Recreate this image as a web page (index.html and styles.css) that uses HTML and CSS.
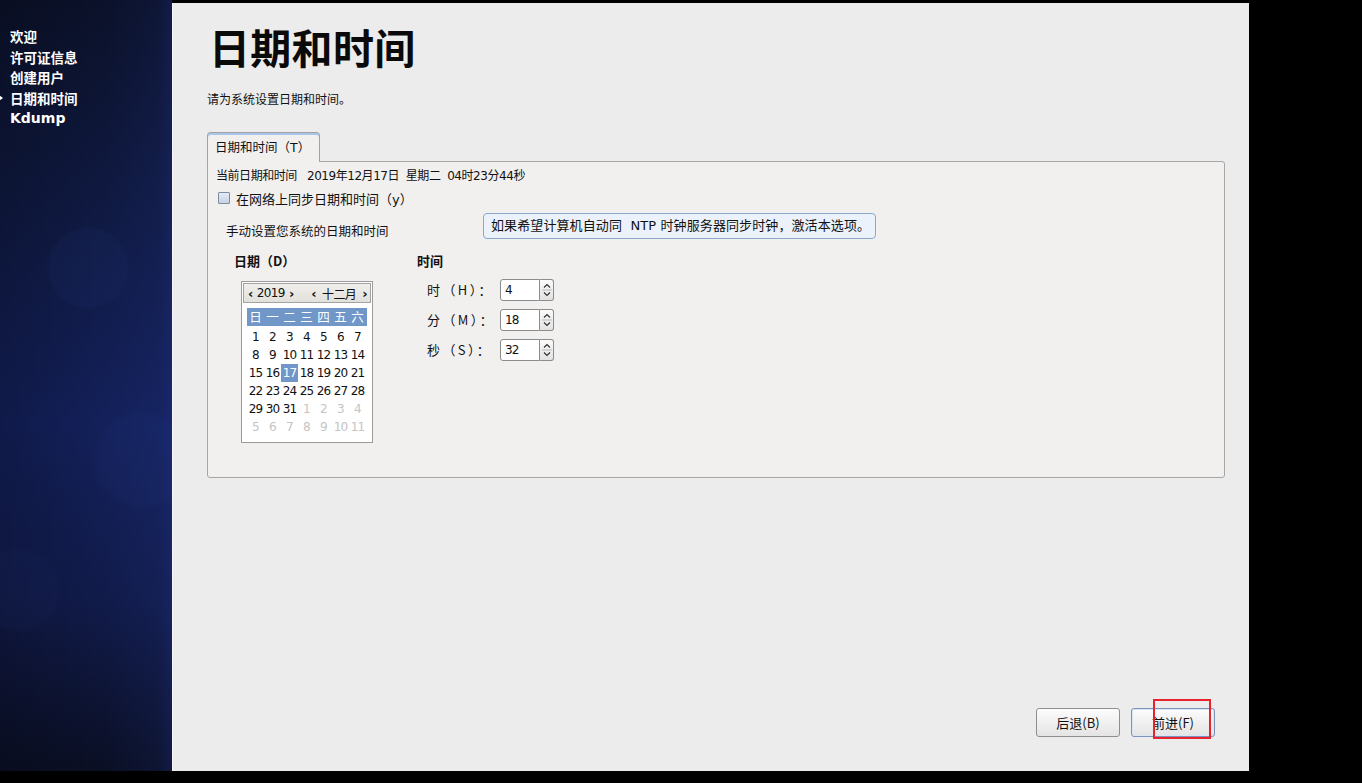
FILE: index.html
```html
<!DOCTYPE html>
<html lang="zh-CN">
<head>
<meta charset="utf-8">
<title>日期和时间</title>
<link rel="stylesheet" href="styles.css">
</head>
<body>
<div class="screen">
  <aside class="sidebar">
    <ul class="steps">
      <li>欢迎</li>
      <li>许可证信息</li>
      <li>创建用户</li>
      <li class="current">日期和时间</li>
      <li class="latin">Kdump</li>
    </ul>
  </aside>
  <main class="panel">
    <h1 class="title">日期和时间</h1>
    <p class="subtitle">请为系统设置日期和时间。</p>
    <div class="notebook">
      <div class="tab">日期和时间（T）</div>
      <div class="page">
        <div class="current-time">当前日期和时间&nbsp;&nbsp; 2019年12月17日&nbsp; 星期二&nbsp; 04时23分44秒</div>
        <div class="sync"><span class="checkbox"></span>在网络上同步日期和时间（y）</div>
        <div class="manual">手动设置您系统的日期和时间</div>
        <div class="tooltip">如果希望计算机自动同&nbsp; NTP 时钟服务器同步时钟，激活本选项。</div>
        <div class="pickers">
          <section class="date-sec">
            <h3 class="sec-label">日期（D）</h3>
            <div class="calendar">
              <div class="cal-head">
                <span class="nav"><span class="arr">‹</span>2019<span class="arr">›</span></span>
                <span class="nav wide"><span class="arr">‹</span>十二月<span class="arr">›</span></span>
              </div>
              <div class="cal-days">
                <span>日</span><span>一</span><span>二</span><span>三</span><span>四</span><span>五</span><span>六</span>
              </div>
              <div class="cal-grid">
                <span>1</span><span>2</span><span>3</span><span>4</span><span>5</span><span>6</span><span>7</span>
                <span>8</span><span>9</span><span>10</span><span>11</span><span>12</span><span>13</span><span>14</span>
                <span>15</span><span>16</span><span class="sel">17</span><span>18</span><span>19</span><span>20</span><span>21</span>
                <span>22</span><span>23</span><span>24</span><span>25</span><span>26</span><span>27</span><span>28</span>
                <span>29</span><span>30</span><span>31</span><span class="other">1</span><span class="other">2</span><span class="other">3</span><span class="other">4</span>
                <span class="other">5</span><span class="other">6</span><span class="other">7</span><span class="other">8</span><span class="other">9</span><span class="other">10</span><span class="other">11</span>
              </div>
            </div>
          </section>
          <section class="time-sec">
            <h3 class="sec-label">时间</h3>
            <div class="time-grid">
              <span class="t-label">时（H）：</span>
              <div class="spin"><span class="entry">4</span><span class="arrows"><svg width="12" height="20" viewBox="0 0 12 20"><path d="M3 7.5 L6 4.5 L9 7.5" fill="none" stroke="#333" stroke-width="1.2"/><path d="M3 12.5 L6 15.5 L9 12.5" fill="none" stroke="#333" stroke-width="1.2"/><line x1="1" y1="10" x2="11" y2="10" stroke="#b9b9b9"/></svg></span></div>
              <span class="t-label">分（M）：</span>
              <div class="spin"><span class="entry">18</span><span class="arrows"><svg width="12" height="20" viewBox="0 0 12 20"><path d="M3 7.5 L6 4.5 L9 7.5" fill="none" stroke="#333" stroke-width="1.2"/><path d="M3 12.5 L6 15.5 L9 12.5" fill="none" stroke="#333" stroke-width="1.2"/><line x1="1" y1="10" x2="11" y2="10" stroke="#b9b9b9"/></svg></span></div>
              <span class="t-label">秒（S）：</span>
              <div class="spin"><span class="entry">32</span><span class="arrows"><svg width="12" height="20" viewBox="0 0 12 20"><path d="M3 7.5 L6 4.5 L9 7.5" fill="none" stroke="#333" stroke-width="1.2"/><path d="M3 12.5 L6 15.5 L9 12.5" fill="none" stroke="#333" stroke-width="1.2"/><line x1="1" y1="10" x2="11" y2="10" stroke="#b9b9b9"/></svg></span></div>
            </div>
          </section>
        </div>
      </div>
    </div>
    <div class="buttons">
      <button class="btn">后退(B)</button>
      <button class="btn primary">前进(F)<span class="mark"></span></button>
    </div>
  </main>
</div>
</body>
</html>
```
FILE: styles.css
```css
* { box-sizing: border-box; }
html, body { margin: 0; padding: 0; background: #000; }
body {
  width: 1362px;
  height: 783px;
  overflow: hidden;
  font-family: "DejaVu Sans", "Noto Sans CJK SC", sans-serif;
  color: #111;
}
.screen { display: flex; align-items: flex-start; height: 783px; }

/* sidebar */
.sidebar {
  width: 172px;
  height: 771px;
  padding-top: 26px;
  background:
    radial-gradient(circle at 88px 268px, rgba(45,70,150,0.08) 0, rgba(45,70,150,0.08) 38px, rgba(45,70,150,0) 42px),
    radial-gradient(circle at 142px 460px, rgba(45,70,150,0.07) 0, rgba(45,70,150,0.07) 44px, rgba(45,70,150,0) 50px),
    radial-gradient(circle at 18px 590px, rgba(45,70,150,0.05) 0, rgba(45,70,150,0.05) 38px, rgba(45,70,150,0) 44px),
    linear-gradient(90deg, rgba(0,0,0,0.18) 0%, rgba(0,0,0,0) 60%, rgba(40,60,150,0.12) 92%, rgba(40,60,160,0.25) 100%),
    linear-gradient(180deg, #0b1129 0%, #0f1940 25%, #13205a 55%, #111b4a 78%, #0a0f24 100%);
}
.steps { list-style: none; margin: 0; padding: 0 0 0 10px; }
.steps li {
  position: relative;
  color: #fff;
  font-family: "Noto Sans CJK SC", sans-serif;
  font-weight: bold;
  font-size: 13.5px;
  line-height: 20.5px;
}
.steps li.current::before {
  content: "";
  position: absolute;
  left: -11px;
  top: 7px;
  border-left: 4px solid #fff;
  border-top: 3px solid transparent;
  border-bottom: 3px solid transparent;
}
.steps li.latin { font-family: "DejaVu Sans", sans-serif; font-size: 14px; }

/* main panel */
.panel {
  width: 1077px;
  height: 768px;
  margin-top: 3px;
  background: #ececec;
  border-left: 1px solid #f7f7fa;
  padding: 19px 24px 34px 34px;
  display: flex;
  flex-direction: column;
}
.title {
  margin: 0 0 0 2px;
  font-family: "Noto Sans CJK SC", sans-serif;
  font-size: 41px;
  line-height: 48px;
  font-weight: bold;
  color: #0a0a0a;
  letter-spacing: 0.3px;
}
.subtitle {
  margin: 21px 0 0 0;
  font-size: 12px;
  line-height: 18px;
}
.notebook { margin-top: 23px; }
.tab {
  position: relative;
  z-index: 1;
  width: 113px;
  height: 30px;
  margin-bottom: -1px;
  padding-left: 7px;
  border: 1px solid #a2a2a2;
  border-bottom: none;
  border-radius: 4px 4px 0 0;
  background: #f1f0ef;
  box-shadow: inset 0 2px 0 #a9c6ea;
  font-size: 12.5px;
  line-height: 29px;
}
.page {
  position: relative;
  height: 317px;
  border: 1px solid #a6a6a6;
  border-radius: 0 3px 3px 3px;
  background: #f1f0ef;
  padding: 5px 0 0 8px;
}
.current-time { font-size: 12px; line-height: 18px; letter-spacing: -0.45px; }
.sync {
  display: flex;
  align-items: center;
  height: 18px;
  margin-top: 4px;
  padding-left: 2px;
  font-size: 13px;
}
.checkbox {
  width: 12px;
  height: 12px;
  margin-right: 6px;
  border: 1px solid #7d8ca3;
  border-radius: 1px;
  background: linear-gradient(180deg, #e4eaf3, #c6d3e4);
}
.manual {
  margin-top: 16px;
  padding-left: 10px;
  font-size: 12.5px;
  line-height: 18px;
}
.tooltip {
  position: absolute;
  left: 275px;
  top: 51px;
  width: 393px;
  height: 26px;
  padding-left: 7px;
  border: 1px solid #8ba7ca;
  border-radius: 4px;
  background: #ebf2fb;
  font-size: 13px;
  line-height: 24px;
  white-space: nowrap;
  letter-spacing: 0.1px;
}
.pickers {
  display: flex;
  margin-top: 11px;
  padding-left: 18px;
}
.date-sec { width: 183px; }
.sec-label {
  margin: 0;
  font-family: "Noto Sans CJK SC", sans-serif;
  font-size: 13px;
  line-height: 18px;
  font-weight: bold;
}
.calendar {
  width: 132px;
  height: 162px;
  margin: 11px 0 0 7px;
  border: 1px solid #9b9b9b;
  background: #fff;
  padding: 1px 5px 0 5px;
}
.cal-head {
  display: flex;
  justify-content: space-between;
  align-items: center;
  height: 20px;
  margin: 0 -4px;
  padding: 0 3px 0 4px;
  border: 1px solid #a3a3a3;
  background: linear-gradient(180deg, #f0efeb, #e2e0db);
  font-size: 12px;
  letter-spacing: -0.6px;
}
.nav { display: flex; align-items: center; gap: 4px; }
.nav.wide { gap: 6px; }
.arr { font-size: 13px; font-weight: bold; }
.cal-days {
  display: grid;
  grid-template-columns: repeat(7, 17px);
  height: 18px;
  margin-top: 5px;
  background: #7097c8;
  color: #fff;
  font-family: "Noto Sans CJK SC", sans-serif;
  font-size: 12.5px;
  line-height: 18px;
  text-align: center;
}
.cal-grid {
  display: grid;
  grid-template-columns: repeat(7, 17px);
  grid-auto-rows: 18px;
  margin-top: 2px;
  font-size: 12px;
  line-height: 18px;
  text-align: center;
  letter-spacing: -0.8px;
}
.cal-grid .sel { background: #7097c8; color: #fff; }
.cal-grid .other { color: #c4c4c4; }
.time-grid {
  display: grid;
  grid-template-columns: 73px 54px;
  grid-auto-rows: 22px;
  row-gap: 8px;
  margin: 9px 0 0 10px;
  align-items: center;
}
.t-label {
  font-family: "Noto Sans CJK SC", sans-serif;
  font-size: 13px;
  line-height: 22px;
  letter-spacing: 2.4px;
}
.spin { display: flex; height: 22px; }
.entry {
  width: 40px;
  border: 1px solid #8c8c8c;
  border-radius: 3px 0 0 3px;
  background: #fff;
  padding-left: 4px;
  font-size: 12px;
  line-height: 20px;
  letter-spacing: -0.8px;
}
.arrows {
  width: 14px;
  border: 1px solid #8c8c8c;
  border-left: none;
  border-radius: 0 3px 3px 0;
  background: linear-gradient(180deg, #fbfbfb, #e2e2e2);
  display: flex;
  align-items: center;
  justify-content: center;
}

/* buttons */
.buttons {
  margin-top: auto;
  display: flex;
  justify-content: flex-end;
  gap: 11px;
  padding-right: 10px;
}
.btn {
  position: relative;
  width: 84px;
  height: 29px;
  border: 1px solid #8f8f8f;
  border-radius: 3px;
  background: linear-gradient(180deg, #fcfcfc, #e4e4e4);
  font-family: "Noto Sans CJK SC", sans-serif;
  font-size: 13px;
  color: #111;
  padding: 0;
}
.btn.primary {
  border-color: #7b93bb;
  box-shadow: inset 0 0 0 1px #dbe6f4;
}
.mark {
  position: absolute;
  left: 21px;
  top: -10px;
  width: 58px;
  height: 40px;
  border: 2px solid #e8232d;
}
```
